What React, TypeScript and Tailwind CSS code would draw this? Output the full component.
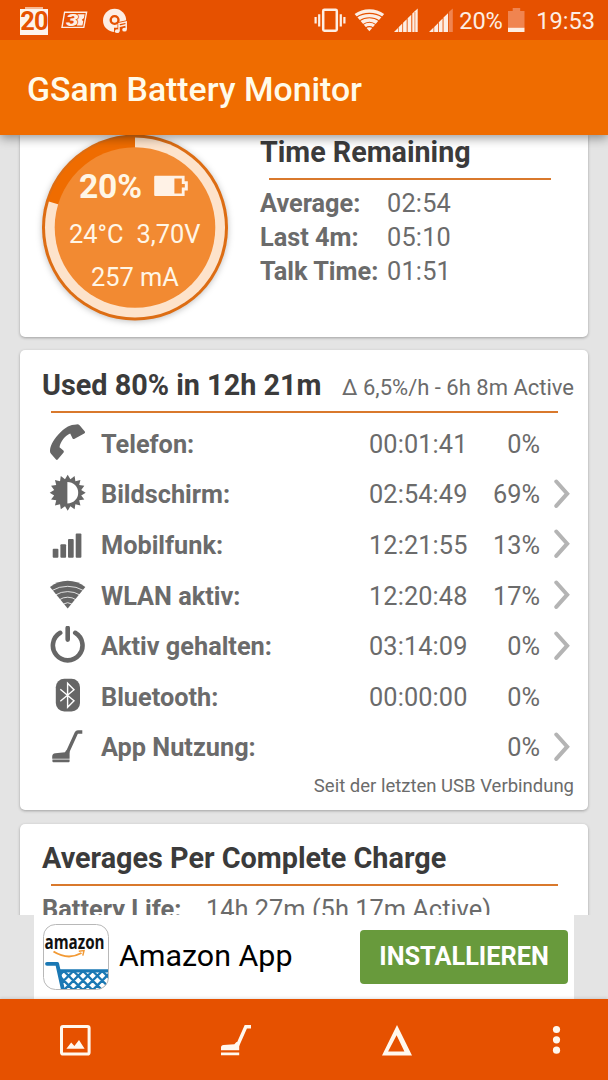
import type { ReactNode } from "react";

const usage = [
  { icon: "phone", label: "Telefon:", time: "00:01:41", percent: "0%", more: false },
  { icon: "screen", label: "Bildschirm:", time: "02:54:49", percent: "69%", more: true },
  { icon: "cell", label: "Mobilfunk:", time: "12:21:55", percent: "13%", more: true },
  { icon: "wifi", label: "WLAN aktiv:", time: "12:20:48", percent: "17%", more: true },
  { icon: "power", label: "Aktiv gehalten:", time: "03:14:09", percent: "0%", more: true },
  { icon: "bluetooth", label: "Bluetooth:", time: "00:00:00", percent: "0%", more: false },
  { icon: "vacuum", label: "App Nutzung:", time: "", percent: "0%", more: true },
];

const remaining = [
  { label: "Average:", value: "02:54" },
  { label: "Last 4m:", value: "05:10" },
  { label: "Talk Time:", value: "01:51" },
];

// 16 pointed star around the brightness disc
const sunPoints = Array.from({ length: 32 }, (_, i) => {
  const r = i % 2 === 0 ? 18 : 13.8;
  const a = (i * Math.PI) / 16 - Math.PI / 2;
  return `${(18.7 + r * Math.cos(a)).toFixed(2)},${(18.7 + r * Math.sin(a)).toFixed(2)}`;
}).join(" ");

// crossing wires of the shopping basket
const basketWires = Array.from({ length: 12 }, (_, i) => {
  const x = -8 + i * 9.6;
  return `M${x} 47 l22 22M${x} 47 l-22 22`;
}).join("");

const icons: Record<string, ReactNode> = {
  phone: (
    <path d="M36 8.8 30.8 2.4Q29.5 1.2 27.5 1.4C21 1.6 16.5 4.2 11.5 9.2C5.5 15 1.6 21.5 1 27.2Q.7 29.2 2 30.8L7 36.6Q8 37.4 8.9 36.3L14.6 29.6Q15.3 28.5 14.4 27.5L10.5 24.2C11.5 18.5 16 13 21.2 10.6L23.6 15.4Q24.4 16.5 25.6 15.8L35.2 10.6Q36.4 9.8 36 8.8Z" />
  ),
  screen: (
    <>
      <polygon points={sunPoints} />
      <path d="M18.4 7.9A10.8 10.8 0 0 1 18.4 29.5Z" fill="#fff" />
    </>
  ),
  cell: (
    <>
      <rect x="3.7" y="24.8" width="5.7" height="8.9" rx="1" />
      <rect x="11.4" y="20.2" width="5.7" height="13.5" rx="1" />
      <rect x="19" y="15" width="5.7" height="18.7" rx="1" />
      <rect x="26.7" y="9.6" width="5.7" height="24.1" rx="1" />
    </>
  ),
  wifi: (
    <>
      <path d="M18.7 33.4 1 12Q9 5.8 18.7 5.8T36.3 12Z" />
      <path d="M3 15.5Q10 11.3 18.7 11.3T34.5 15.5M6.5 20Q12 16.6 18.7 16.6T31 20M10.3 24.8Q14 22.2 18.7 22.2T27 24.8M14.5 29Q18.7 26.4 22.8 29" fill="none" stroke="#fff" strokeWidth="0.8" />
    </>
  ),
  power: (
    <path d="M11.2 6.8A14.8 14.8 0 1 0 26.2 6.8M18.7 2V13.6" fill="none" stroke="currentColor" strokeWidth="4.6" strokeLinecap="round" />
  ),
  bluetooth: (
    <>
      <rect x="6.8" y="2.8" width="24.2" height="32.8" rx="8.5" />
      <path d="M11.3 13.2 25 24.7 18.6 31.2V7.2L25 13.7 11.3 25.2" fill="none" stroke="#fff" strokeWidth="1.4" />
    </>
  ),
  vacuum: (
    <>
      <path d="M33.3 5H28.9Q27.8 5 27.3 6L18.4 25.5" fill="none" stroke="currentColor" strokeWidth="3.4" />
      <path d="M3.2 31.8V29.5Q3.2 26.5 6.4 26.3L16 25.3 17.2 23.2 20.6 24.6V31.8ZM3.4 32.6H20.6V34.2Q20.6 35.2 19.6 35.2H4.4Q3.4 35.2 3.4 34.2Z" />
    </>
  ),
};

function Divider({ className }: { className: string }) {
  return <div className={`h-[2px] bg-[#d9792c] ${className}`} />;
}

function StatusBar() {
  return (
    <div className="flex h-10 items-center bg-[#e65100] text-[#fdeee4]">
      <div className="ml-5 mt-[1px] flex h-[28px] w-7 flex-col items-center">
        <div className="h-[2px] w-[18px] shrink-0 bg-[#f6b894]" />
        <div className="flex h-[26px] w-7 items-center justify-center bg-[#fdf3ec] text-[25.5px] font-bold leading-none tracking-[-1px] text-[#e65100]">
          20
        </div>
      </div>

      <svg className="ml-[13px]" width="27" height="18" viewBox="0 0 27 18">
        <path d="M3.6 1.2H25.6L22.8 16.4H1Z" fill="none" stroke="currentColor" strokeWidth="1.4" />
        <path d="M16.5 3.2H23.6L23 7 20.8 8.8 22.3 10.6 21.4 14.6H16Z" fill="currentColor" />
        <text x="5" y="14.8" fontSize="16.5" fontWeight="900" fill="currentColor" stroke="#e65100" strokeWidth="1.2" paintOrder="stroke" textLength="12.5" lengthAdjust="spacingAndGlyphs" fontStyle="italic">
          3
        </text>
      </svg>

      <svg className="ml-[14px] mt-[1px]" width="26" height="26" viewBox="0 0 26 26">
        <circle cx="12.6" cy="12.4" r="11.6" fill="currentColor" />
        <circle cx="12.6" cy="12" r="3.9" fill="none" stroke="#e65100" strokeWidth="2.4" />
        <path d="M15.5 14.3 25.6 12V26H12V19.8H15.5Z" fill="#e65100" />
        <path d="M17 22.9V15.6L24.2 14V21.4M17 18.4 24.2 16.8" fill="none" stroke="currentColor" strokeWidth="1.5" />
        <ellipse cx="15.2" cy="23.2" rx="2.3" ry="1.9" fill="currentColor" />
        <ellipse cx="22.5" cy="21.7" rx="2.3" ry="1.9" fill="currentColor" />
      </svg>

      <svg className="ml-auto" width="32" height="24" viewBox="0 0 32 24">
        <rect x="9.2" y="1.7" width="13.6" height="21" rx="1.2" fill="none" stroke="currentColor" strokeWidth="2.5" />
        <path d="M1.6 9V15.6M5.2 6.2V18.4M26.8 6.2V18.4M30.4 9V15.6" stroke="currentColor" strokeWidth="2.2" />
      </svg>

      <svg className="ml-[8px]" width="31" height="24" viewBox="0 0 31 24">
        <path d="M15.4 23.3.6 6Q7 1.2 15.4 1.2T30.2 6Z" fill="currentColor" />
        <path d="M2.5 9.2Q8 5.4 15.4 5.4T28.3 9.2M5.5 12.9Q10 9.7 15.4 9.7T25.3 12.9M8.8 16.6Q12 14.2 15.4 14.2T22 16.6M11.6 19.9Q15.4 17.3 19.2 19.9" fill="none" stroke="#e65100" strokeWidth="1.1" />
      </svg>

      <svg className="ml-[9px]" width="24" height="24" viewBox="0 0 24 24">
        <path d="M0 24 4 20V24ZM4.6 19.2 8.3 15.6V24H4.6ZM9.1 14.8 12.7 11.2V24H9.1ZM13.6 10.3 17.3 6.7V24H13.6ZM18.3 5.6 23.7 .4V24H18.3Z" fill="currentColor" />
        <path d="M20.9 4V24" stroke="#e65100" strokeWidth="0.6" />
      </svg>

      <svg className="ml-[11px]" width="24" height="24" viewBox="0 0 24 24">
        <path d="M0 24 4.5 19.6V24ZM5.2 18.9 9 15.2V24H5.2ZM9.8 14.3 13.6 10.6V24H9.8ZM14.5 9.6 19 5.2V24H14.5Z" fill="currentColor" />
        <path d="M19.8 4 23.8 .4V24H19.8Z" fill="#f08450" />
      </svg>

      <span className="ml-[6px] w-[43px] whitespace-nowrap pt-[2px] text-[23.6px] leading-10 tracking-[-0.1px]">20%</span>

      <svg className="ml-[6px]" width="17" height="24" viewBox="0 0 17 24">
        <path d="M0 3H4.7V0H12.2V3H16.5V20H0Z" fill="#f08450" />
        <path d="M0 19.8H16.5V24H0Z" fill="currentColor" />
      </svg>

      <span className="ml-[11px] mr-[13px] pt-[2px] text-[23.6px] leading-10">19:53</span>
    </div>
  );
}

function BatteryDial() {
  return (
    <div className="relative -mt-px ml-[21px] h-[188px] w-[188px] shrink-0 text-[#fff6e6]">
      <svg className="absolute inset-0 overflow-visible drop-shadow-[0_1px_3px_rgba(0,0,0,0.25)]" width="188" height="188" viewBox="0 0 188 188">
        <circle cx="94" cy="93.5" r="93" fill="#dd6d13" />
        <circle cx="94" cy="93.5" r="90" fill="#fde3cb" />
        <path d="M94 93.5V2.5A91 91 0 0 0 7 67.2Z" fill="#ef6c00" />
        <circle cx="94" cy="93.5" r="80.3" fill="#f28a32" />
      </svg>
      <div className="relative pt-[33px]">
        <div className="flex h-[40px] items-center pl-[38px] text-[33.6px] font-bold tracking-[-0.2px]">
          20%
          <svg className="-mt-[2px] ml-[12px]" width="35" height="22" viewBox="0 0 35 22">
            <path d="M1.2 .8H30.6V6.2H33.8V15.4H30.6V21H1.2Q.2 21 .2 20V1.8Q.2 .8 1.2 .8ZM20.4 3.4V18.4H27.8V12.6H30.8V9H27.8V3.4Z" fill="#fff2e6" fillRule="evenodd" />
          </svg>
        </div>
        <div className="flex h-[54px] items-center gap-[13px] pl-[28px] pt-px text-[25.4px]">
          <span>24°C</span>
          <span>3,70V</span>
        </div>
        <div className="flex h-[32px] items-center pl-[50px] text-[25.4px]">257 mA</div>
      </div>
    </div>
  );
}

function TimeRemaining() {
  return (
    <section className="flex h-[202px] shrink-0 rounded-b-[5px] bg-white shadow-[0_1px_3px_rgba(0,0,0,0.3)]">
      <BatteryDial />
      <div className="ml-[31px]">
        <h2 className="h-[43px] text-[28.7px] font-bold leading-[34px] text-[#3b3b3b]">Time Remaining</h2>
        <Divider className="ml-[9px] w-[282px]" />
        <div className="mt-[7px]">
          {remaining.map((row) => (
            <div key={row.label} className="flex h-[34px] items-center text-[25.3px]">
              <span className="w-[127px] whitespace-nowrap font-bold">{row.label}</span>
              <span className="tracking-[0.2px]">{row.value}</span>
            </div>
          ))}
        </div>
      </div>
    </section>
  );
}

function UsageCard() {
  return (
    <section className="mt-[13px] h-[460px] shrink-0 rounded-[5px] bg-white shadow-[0_1px_3px_rgba(0,0,0,0.3)]">
      <div className="flex h-[61px] items-baseline justify-between pl-[22px] pr-[14px] pt-[14px]">
        <h2 className="text-[28.8px] font-bold leading-[42px] text-[#3b3b3b]">Used 80% in 12h 21m</h2>
        <span className="text-[22px]">Δ 6,5%/h - 6h 8m Active</span>
      </div>
      <Divider className="ml-[31px] w-[507px]" />

      <div className="mt-[6.5px]">
        {usage.map((row) => (
          <div key={row.label} className="flex h-[50.6px] items-center pl-[29px] text-[25.3px]">
            <svg className="-mt-[5px] shrink-0 text-[#666]" width="38" height="38" viewBox="0 0 38 38" fill="currentColor">
              {icons[row.icon]}
            </svg>
            <span className="ml-[14px] w-[268px] font-bold">{row.label}</span>
            <span className="w-[100px] tracking-[0.12px]">{row.time}</span>
            <span className="w-[71px] text-right">{row.percent}</span>
            {row.more && (
              <svg className="-mt-[3px] ml-[13px]" width="18" height="30" viewBox="0 0 18 30">
                <path d="M3.3 2.5 14.2 14.7 3.3 26.9" fill="none" stroke="#b4b4b4" strokeWidth="4" strokeLinecap="round" />
              </svg>
            )}
          </div>
        ))}
      </div>
      <p className="pr-[14px] text-right text-[18.5px] leading-[24px]">Seit der letzten USB Verbindung</p>
    </section>
  );
}

function AveragesCard() {
  return (
    <section className="mt-[14px] h-[200px] shrink-0 rounded-[5px] bg-white shadow-[0_1px_3px_rgba(0,0,0,0.3)]">
      <h2 className="h-[60px] pl-[22px] pt-[13px] text-[28.8px] font-bold leading-[42px] text-[#3b3b3b]">
        Averages Per Complete Charge
      </h2>
      <Divider className="ml-[31px] w-[507px]" />
      <div className="mt-[6px] flex h-[34px] items-center pl-[22px] text-[25.4px]">
        <span className="w-[164px] font-bold">Battery Life:</span>
        <span>14h 27m (5h 17m Active)</span>
      </div>
    </section>
  );
}

function AmazonLogo() {
  return (
    <svg className="ml-[9px]" width="66" height="66" viewBox="0 0 66 66">
      <defs>
        <clipPath id="tile">
          <rect x="0.5" y="0.5" width="65" height="65" rx="12" />
        </clipPath>
        <clipPath id="basket">
          <path d="M16 46H66V66H20Z" />
        </clipPath>
      </defs>
      <rect x="0.5" y="0.5" width="65" height="65" rx="12" fill="#fff" />
      <g clipPath="url(#tile)">
        <text x="1.5" y="24.8" fontFamily="Open Sans, sans-serif" fontSize="19.5" fontWeight="700" fill="#111" textLength="60" lengthAdjust="spacingAndGlyphs">
          amazon
        </text>
        <path d="M10.5 27.5Q25 36.5 38.5 29" fill="none" stroke="#f29a35" strokeWidth="2" />
        <path d="M35.8 27.2 41 26.6 39.8 31.6" fill="none" stroke="#f29a35" strokeWidth="1.5" />
        <path d="M4 39.8H14.2L20 66" fill="none" stroke="#1a78b4" strokeWidth="3.8" strokeLinecap="round" strokeLinejoin="round" />
        <path d="M16 45.2H66V48.6H16Z" fill="#1a78b4" />
        <g clipPath="url(#basket)">
          <path d={basketWires} fill="none" stroke="#1a78b4" strokeWidth="2.4" />
        </g>
      </g>
      <rect x="0.5" y="0.5" width="65" height="65" rx="12" fill="none" stroke="#b8b8b8" />
    </svg>
  );
}

function AdBanner() {
  return (
    <div className="mx-[34px] flex h-[84px] items-center bg-white">
      <AmazonLogo />
      <span className="-mt-[2px] ml-[10px] text-[30.4px] text-black">Amazon App</span>
      <button className="-mt-px ml-auto mr-[6px] h-[54px] w-[208px] rounded-[4px] bg-[#689a3c] text-[25.3px] font-bold text-white">
        INSTALLIEREN
      </button>
    </div>
  );
}

function BottomBar() {
  return (
    <nav className="relative flex h-[81px] items-center bg-[#e65100] pl-[60px] text-[#fff8ee] shadow-[0_-1px_3px_rgba(0,0,0,0.12)]">
      <svg className="mt-px" width="31" height="31" viewBox="0 0 31 31">
        <rect x="1.5" y="1.5" width="27.6" height="27.6" rx="1.6" fill="none" stroke="currentColor" strokeWidth="3" />
        <path d="M6.4 23.8 11.2 17.6 14.4 21 19 15 24.6 23.8Z" fill="currentColor" />
      </svg>
      <svg className="ml-[129px] mt-px" width="32" height="31" viewBox="0 0 32 31">
        <path d="M31 1.8H25.8L16.2 23.5" fill="none" stroke="currentColor" strokeWidth="3.4" />
        <path d="M1 25.2V22.5Q1 20 3.6 20L14.4 19.2 16.4 17 19.2 18V25.2ZM1 27.4H19.2V30.2H1Z" fill="currentColor" />
      </svg>
      <svg className="ml-[130px] mt-px" width="30" height="31" viewBox="0 0 30 31">
        <path d="M15 0 30 30.5H0ZM14.6 10.2 6.1 26.6H22.4Z" fill="currentColor" fillRule="evenodd" />
      </svg>
      <svg className="ml-[140px]" width="9" height="30" viewBox="0 0 9 30">
        <circle cx="4.5" cy="4.5" r="3.6" fill="currentColor" />
        <circle cx="4.5" cy="14.8" r="3.6" fill="currentColor" />
        <circle cx="4.5" cy="25.2" r="3.6" fill="currentColor" />
      </svg>
    </nav>
  );
}

export default function App() {
  return (
    <div className="flex h-[1080px] w-[608px] flex-col overflow-hidden bg-[#e4e4e4] font-[Roboto,sans-serif] text-[#6b6b6b]">
      <header className="relative z-10 shadow-[0_3px_10px_rgba(0,0,0,0.4)]">
        <StatusBar />
        <div className="flex h-[95px] items-center bg-[#ef6c00] pl-[27px] pt-[6px]">
          <h1 className="text-[33.8px] font-medium text-[#fffbea]">GSam Battery Monitor</h1>
        </div>
      </header>

      <main className="flex h-[780px] flex-col overflow-hidden px-5">
        <TimeRemaining />
        <UsageCard />
        <AveragesCard />
      </main>

      <AdBanner />
      <BottomBar />
    </div>
  );
}
